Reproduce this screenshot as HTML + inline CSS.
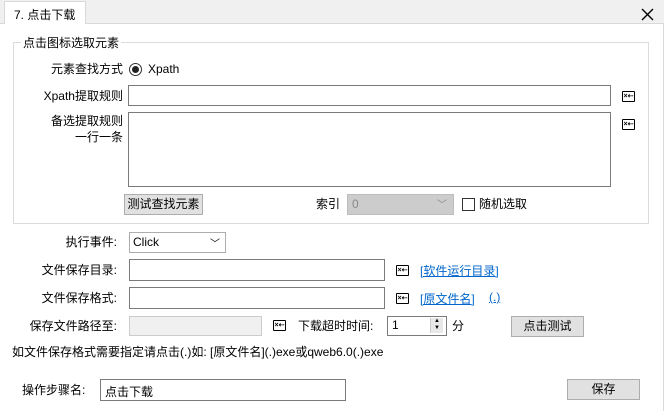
<!DOCTYPE html><html><head><meta charset="utf-8"><style>
body{margin:0;width:664px;height:411px;background:#fff;font-family:"Liberation Sans","Noto Sans CJK SC",sans-serif;font-size:12px;color:#000;position:relative;overflow:hidden}
.a{position:absolute}
.in{position:absolute;border:1px solid #7a7a7a;background:#fff;box-sizing:border-box}
.btn{position:absolute;border:1px solid #adadad;background:#e1e1e1;box-sizing:border-box;text-align:center;line-height:19px}
.lbl{position:absolute;text-align:right;line-height:16px}
.ic{position:absolute;width:11px;height:9px;border:1px solid #000;border-radius:1px;font-size:7px;line-height:9px;text-align:center;font-weight:bold}
.lk{position:absolute;color:#0066cc;text-decoration:underline}
</style></head><body>
<div class="a" style="left:0;top:0;width:664px;height:23px;background:#f0f0f0;border-bottom:1px solid #d9d9d9"></div>
<div class="a" style="left:4px;top:1px;width:82px;height:23px;background:#fff;border:1px solid #d9d9d9;border-bottom:none;box-sizing:border-box;padding:4px 0 0 9px;font-size:12px">7. 点击下载</div>
<svg class="a" style="left:641px;top:8px" width="13" height="13"><path d="M1 1L12 12M12 1L1 12" stroke="#000" stroke-width="1.4"/></svg>
<div class="a" style="left:663px;top:23px;width:1px;height:388px;background:#d9d9d9"></div>
<div class="a" style="left:13px;top:42px;width:636px;height:182px;border:1px solid #dcdcdc;box-sizing:border-box"></div>
<div class="a" style="left:21px;top:35px;background:#fff;padding:0 2px;line-height:16px">点击图标选取元素</div>
<div class="lbl" style="left:20px;width:103px;top:61px">元素查找方式</div>
<div class="a" style="left:129px;top:63px;width:11px;height:11px;border:1px solid #333;border-radius:50%"></div>
<div class="a" style="left:132px;top:66px;width:7px;height:7px;background:#222;border-radius:50%"></div>
<div class="a" style="left:148px;top:61px;line-height:16px">Xpath</div>
<div class="lbl" style="left:20px;width:103px;top:88px">Xpath提取规则</div>
<div class="in" style="left:128px;top:85px;width:483px;height:21px"></div>
<div class="ic" style="left:622px;top:91px">×⇠</div>
<div class="lbl" style="left:20px;width:103px;top:113px">备选提取规则<br>一行一条</div>
<div class="in" style="left:128px;top:112px;width:483px;height:75px"></div>
<div class="ic" style="left:622px;top:119px">×⇠</div>
<div class="btn" style="left:124px;top:194px;width:79px;height:21px">测试查找元素</div>
<div class="a" style="left:316px;top:196px;line-height:16px">索引</div>
<div class="a" style="left:347px;top:194px;width:107px;height:21px;background:#ccc;border:1px solid #bdbdbd;box-sizing:border-box;color:#8a8a8a;padding:2px 0 0 4px">0<span style="position:absolute;right:6px;top:1px;font-size:10px">﹀</span></div>
<div class="a" style="left:462px;top:198px;width:11px;height:11px;border:1px solid #333"></div>
<div class="a" style="left:479px;top:196px;line-height:16px">随机选取</div>
<div class="lbl" style="left:20px;width:97px;top:234px">执行事件:</div>
<div class="a" style="left:129px;top:232px;width:97px;height:21px;border:1px solid #adadad;background:#fff;box-sizing:border-box;padding:2px 0 0 3px">Click<span style="position:absolute;right:5px;top:2px;font-size:10px">﹀</span></div>
<div class="lbl" style="left:20px;width:97px;top:262px">文件保存目录:</div>
<div class="in" style="left:129px;top:259px;width:256px;height:22px"></div>
<div class="ic" style="left:396px;top:265px">×⇠</div>
<div class="lk" style="left:420px;top:262px">[软件运行目录]</div>
<div class="lbl" style="left:20px;width:97px;top:290px">文件保存格式:</div>
<div class="in" style="left:129px;top:287px;width:256px;height:22px"></div>
<div class="ic" style="left:396px;top:293px">×⇠</div>
<div class="lk" style="left:420px;top:290px">[原文件名]</div>
<div class="lk" style="left:489px;top:290px">(.)</div>
<div class="lbl" style="left:10px;width:107px;top:318px">保存文件路径至:</div>
<div class="a" style="left:129px;top:316px;width:133px;height:20px;background:#f0f0f0;border:1px solid #ccc;box-sizing:border-box"></div>
<div class="ic" style="left:273px;top:320px">×⇠</div>
<div class="a" style="left:298px;top:318px;line-height:16px">下载超时时间:</div>
<div class="in" style="left:387px;top:316px;width:60px;height:20px;padding:1px 0 0 4px">1</div>
<div class="a" style="left:430px;top:318px;width:12px;height:15px;background:#e8e8e8;border-left:1px solid #ccc;font-size:6px;line-height:7px;text-align:center">▲<br>▼</div>
<div class="a" style="left:452px;top:318px;line-height:16px">分</div>
<div class="btn" style="left:511px;top:316px;width:73px;height:21px">点击测试</div>
<div class="a" style="left:12px;top:344px;line-height:16px">如文件保存格式需要指定请点击(.)如: [原文件名](.)exe或qweb6.0(.)exe</div>
<div class="a" style="left:22px;top:382px;line-height:16px">操作步骤名:</div>
<div class="in" style="left:100px;top:379px;width:246px;height:22px;padding:3px 0 0 4px">点击下载</div>
<div class="btn" style="left:567px;top:379px;width:73px;height:21px">保存</div>
</body></html>
